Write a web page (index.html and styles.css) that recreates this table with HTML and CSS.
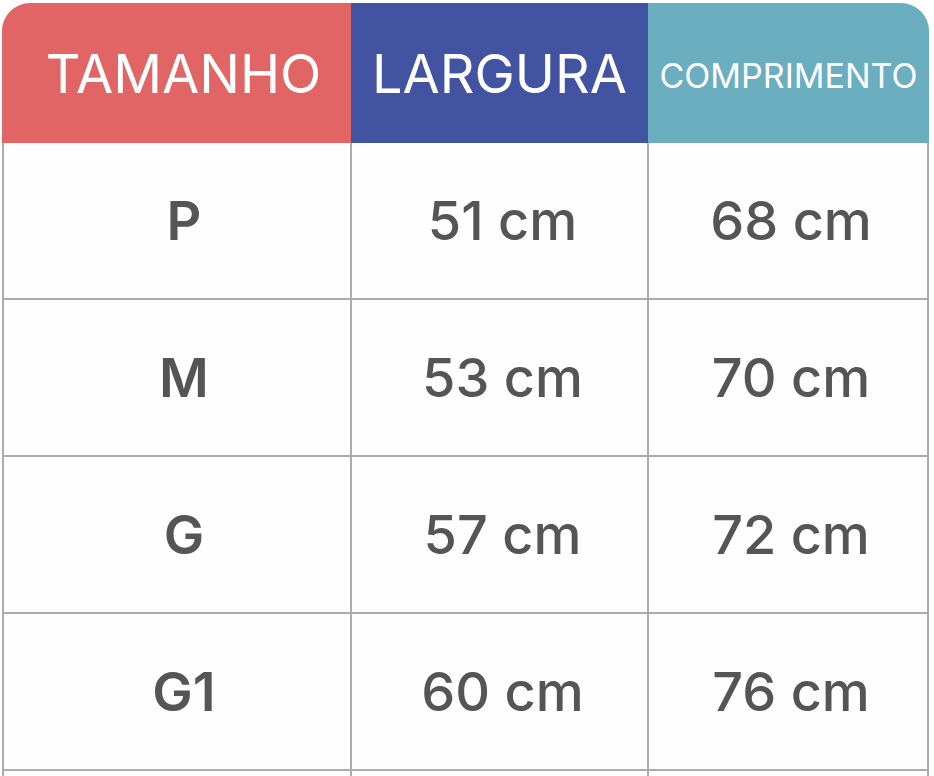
FILE: index.html
```html
<!DOCTYPE html>
<html lang="pt">
<head>
<meta charset="utf-8">
<title>Tabela de medidas</title>
<link rel="stylesheet" href="styles.css">
</head>
<body>
<div class="table">
  <div class="head">
    <div class="h h-size">TAMANHO</div>
    <div class="h h-width">LARGURA</div>
    <div class="h h-length">COMPRIMENTO</div>
  </div>
  <div class="body">
    <div class="c c-size">P</div><div class="c">51 cm</div><div class="c">68 cm</div>
    <div class="c c-size">M</div><div class="c">53 cm</div><div class="c">70 cm</div>
    <div class="c c-size">G</div><div class="c">57 cm</div><div class="c">72 cm</div>
    <div class="c c-size">G1</div><div class="c">60 cm</div><div class="c">76 cm</div>
    <div class="c c-size"></div><div class="c"></div><div class="c"></div>
  </div>
</div>
</body>
</html>
```
FILE: styles.css
```css
html, body {
  margin: 0;
  padding: 0;
  background: #ffffff;
  overflow: hidden;
}
body {
  font-family: Inter, "Noto Sans", sans-serif;
}
.table {
  width: 927px;
  margin: 3px 0 0 2px;
}
.head {
  display: grid;
  grid-template-columns: 349px 297px 281px;
  height: 140px;
  border-radius: 28px 28px 0 0;
  overflow: hidden;
}
.h {
  display: flex;
  align-items: center;
  justify-content: center;
  color: #ffffff;
  font-weight: 400;
  font-size: 54px;
}
.h-size { background: #e26565; padding-left: 14px; }
.h-width { background: #4253a1; }
.h-length { background: #6aaec0; font-size: 34px; padding-top: 4px; }
.body {
  display: grid;
  grid-template-columns: 346px 295px 278px;
  grid-auto-rows: 155px;
  gap: 2px;
  padding: 0 2px;
  background: #acacac;
}
.c {
  background: #fefefe;
  display: flex;
  align-items: center;
  justify-content: center;
  color: #555555;
  font-size: 54px;
  font-weight: 500;
  padding-left: 6px;
}
.c-size { font-weight: 600; padding-left: 14px; }
```
